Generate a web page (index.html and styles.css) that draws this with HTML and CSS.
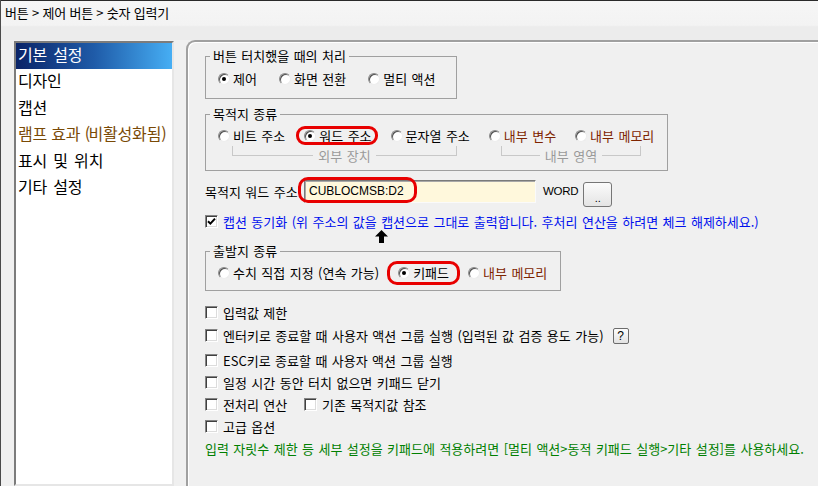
FILE: index.html
```html
<!DOCTYPE html>
<html lang="ko">
<head>
<meta charset="utf-8">
<title>숫자 입력기</title>
<link rel="stylesheet" href="styles.css">
</head>
<body>
<div class="window">
  <header class="titlebar">버튼 &gt; 제어 버튼 &gt; 숫자 입력기</header>
  <div class="main">
    <ul class="nav">
      <li class="sel">기본 설정</li>
      <li>디자인</li>
      <li>캡션</li>
      <li class="lamp">램프 효과 <span class="paren">(</span>비활성화됨<span class="paren">)</span></li>
      <li>표시 및 위치</li>
      <li>기타 설정</li>
    </ul>
    <section class="panel">
      <fieldset class="group g1">
        <legend>버튼 터치했을 때의 처리</legend>
        <div class="radios gap22">
          <label class="opt"><span class="radio on"></span>제어</label>
          <label class="opt"><span class="radio"></span>화면 전환</label>
          <label class="opt"><span class="radio"></span>멀티 액션</label>
        </div>
      </fieldset>

      <fieldset class="group g2">
        <legend>목적지 종류</legend>
        <div class="radios gap19">
          <label class="opt"><span class="radio"></span>비트 주소</label>
          <label class="opt hl hl-word"><span class="radio on"></span>워드 주소</label>
          <label class="opt"><span class="radio"></span>문자열 주소</label>
          <label class="opt internal"><span class="radio"></span>내부 변수</label>
          <label class="opt internal"><span class="radio"></span>내부 메모리</label>
        </div>
        <div class="brackets">
          <div class="br br1"><span class="l"></span><span class="t">외부 장치</span><span class="r"></span></div>
          <div class="br br2"><span class="l"></span><span class="t">내부 영역</span><span class="r"></span></div>
        </div>
      </fieldset>

      <div class="addr">
        <span class="addr-label">목적지 워드 주소</span>
        <div class="field">CUBLOCMSB:D2<span class="hl-addr"></span></div>
        <span class="unit">WORD</span>
        <button class="dots" type="button">..</button>
      </div>

      <label class="caption"><span class="cb checked"><svg viewBox="0 0 9 9" width="9" height="9"><path d="M1 4.2 L3.4 6.6 L8 1.6" fill="none" stroke="#000" stroke-width="2"/></svg></span>캡션 동기화 (위 주소의 값을 캡션으로 그대로 출력합니다. 후처리 연산을 하려면 체크 해제하세요.)</label>
      <svg class="arrow" viewBox="0 0 13 13" width="13" height="13"><path d="M6.5 0 L13 6.5 L9 6.5 L9 13 L4 13 L4 6.5 L0 6.5 Z" fill="#000"/></svg>

      <fieldset class="group g3">
        <legend>출발지 종류</legend>
        <div class="radios gap19">
          <label class="opt"><span class="radio"></span>수치 직접 지정 (연속 가능)</label>
          <label class="opt hl hl-key"><span class="radio on"></span>키패드</label>
          <label class="opt internal"><span class="radio"></span>내부 메모리</label>
        </div>
      </fieldset>

      <div class="checks">
        <div class="crow"><label class="ck"><span class="cb"></span>입력값 제한</label></div>
        <div class="crow tall"><label class="ck"><span class="cb"></span>엔터키로 종료할 때 사용자 액션 그룹 실행 (입력된 값 검증 용도 가능)</label><button class="help" type="button">?</button></div>
        <div class="crow shift"><label class="ck"><span class="cb"></span>ESC키로 종료할 때 사용자 액션 그룹 실행</label></div>
        <div class="crow"><label class="ck"><span class="cb"></span>일정 시간 동안 터치 없으면 키패드 닫기</label></div>
        <div class="crow"><label class="ck w99"><span class="cb"></span>전처리 연산</label><label class="ck"><span class="cb"></span>기존 목적지값 참조</label></div>
        <div class="crow"><label class="ck"><span class="cb"></span>고급 옵션</label></div>
        <p class="note">입력 자릿수 제한 등 세부 설정을 키패드에 적용하려면 [멀티 액션&gt;동적 키패드 실행&gt;기타 설정]를 사용하세요.</p>
      </div>
    </section>
  </div>
</div>
</body>
</html>
```

FILE: styles.css
```css
html, body {
  margin: 0;
  padding: 0;
}
body {
  font-family: "Noto Sans CJK KR", "Noto Sans", sans-serif;
  font-size: 13px;
  color: #000;
  background: #f0f0f0;
}
.window {
  width: 818px;
  height: 486px;
  box-sizing: border-box;
  border-left: 1px solid #4a4a4a;
  display: flex;
  flex-direction: column;
  overflow: hidden;
  background: #f0f0f0;
}
.titlebar {
  height: 40px;
  flex: none;
  box-sizing: border-box;
  border-top: 1px solid #2a2a2a;
  background: linear-gradient(#f6f6f6 0, #f3f3f3 62%, #ececec 66%, #ececec 100%);
  padding: 3px 0 0 4px;
  font-size: 13px;
  line-height: 18px;
  letter-spacing: -0.2px;
}
.main {
  flex: 1;
  display: flex;
  min-height: 0;
}
.nav {
  list-style: none;
  margin: 1px 0 0 13px;
  padding: 0;
  width: 160px;
  flex: none;
  box-sizing: border-box;
  background: #fff;
  border: 2px solid;
  border-color: #7c7c7c #e6e6e6 #e6e6e6 #7c7c7c;
  font-size: 16px;
  letter-spacing: -0.2px;
  word-spacing: 2px;
}
.nav li {
  padding-left: 2px;
  height: 26.4px;
  line-height: 23px;
  white-space: nowrap;
}
.nav .paren {
  letter-spacing: -1.5px;
}
.nav .sel {
  background: linear-gradient(90deg, #0a2468 0%, #1f5ba8 50%, #46aef4 100%);
  color: #fff;
}
.nav .lamp {
  color: #7a4a06;
  word-spacing: 0;
}
.panel {
  flex: 1;
  margin-left: 12px;
  border-top: 2px solid #a0a0a0;
  border-left: 2px solid #a0a0a0;
  border-top-left-radius: 9px;
  box-shadow: inset 1px 1px 0 #fff;
  padding: 6px 0 0 17px;
  word-spacing: 0.8px;
}
.group {
  margin: 0;
  padding: 7px 0 11px 12px;
  border: 1px solid #a0a0a0;
  box-sizing: border-box;
  min-width: 0;
}
.group legend {
  padding: 0 3px;
  margin-left: -8px;
  line-height: 16px;
  font-size: 13px;
}
.g1 { width: 252px; }
.g2 { width: 463px; margin-top: 7px; padding-top: 6px; padding-bottom: 14px; }
.g3 { width: 356px; padding-top: 6px; padding-bottom: 9px; }
.radios {
  display: flex;
  height: 16px;
  align-items: center;
}
.gap22 { gap: 22px; }
.gap19 { gap: 19px; }
.opt {
  display: flex;
  align-items: center;
  gap: 3px;
  line-height: 16px;
  white-space: nowrap;
  position: relative;
}
.internal { color: #7e2400; }
.radio {
  width: 12px;
  height: 12px;
  flex: none;
  border-radius: 50%;
  box-sizing: border-box;
  background: #fff;
  border: 1px solid;
  border-color: #8a8a8a #ececec #ececec #8a8a8a;
  box-shadow: inset 1px 1px 0 #505050;
  display: flex;
  align-items: center;
  justify-content: center;
}
.radio.on::after {
  content: "";
  width: 4px;
  height: 4px;
  border-radius: 50%;
  background: #000;
}
.hl::after {
  content: "";
  position: absolute;
  border: 3px solid #e80000;
  border-radius: 10px;
}
.hl-word::after { left: -8px; right: -6px; top: -2px; bottom: -1px; border-radius: 9px; }
.hl-key::after { left: -11px; right: -11px; top: -4px; bottom: -4px; }
.brackets {
  display: flex;
  margin-top: 2px;
  height: 10px;
}
.br {
  display: flex;
  align-items: flex-end;
  height: 10px;
}
.br .l, .br .r {
  flex: 1;
  height: 10px;
  box-sizing: border-box;
  border-bottom: 1px solid #c8c8c8;
}
.br .l { border-left: 1px solid #c8c8c8; }
.br .r { border-right: 1px solid #c8c8c8; }
.br .t {
  color: #9a9a9a;
  line-height: 14px;
  margin-bottom: -7px;
  padding: 0 5px;
  white-space: nowrap;
}
.br1 { margin-left: 14px; width: 225px; }
.br2 { margin-left: 44px; width: 140px; }
.addr {
  display: flex;
  align-items: flex-start;
  margin-top: 9px;
  height: 27px;
}
.addr-label {
  width: 99px;
  flex: none;
  line-height: 23px;
  white-space: nowrap;
}
.field {
  position: relative;
  width: 232px;
  height: 23px;
  flex: none;
  box-sizing: border-box;
  background: #fff8dc;
  border: 1px solid;
  border-color: #7a7a7a #fafafa #fafafa #7a7a7a;
  box-shadow: inset 1px 1px 0 #a8a8a8;
  font-family: "Liberation Sans", Arial, sans-serif;
  font-size: 12px;
  line-height: 21px;
  padding-left: 4px;
}
.hl-addr {
  position: absolute;
  left: -7px;
  top: -4px;
  width: 119px;
  height: 26px;
  box-sizing: border-box;
  border: 3px solid #e80000;
  border-radius: 10px;
}
.unit {
  margin-left: 7px;
  line-height: 23px;
  font-family: "Liberation Sans", Arial, sans-serif;
  font-size: 11.5px;
  letter-spacing: -0.3px;
}
.dots {
  margin: 2px 0 0 5px;
  width: 29px;
  height: 25px;
  box-sizing: border-box;
  padding: 6px 0 0;
  border: 1px solid #767676;
  border-radius: 3px;
  background: linear-gradient(#fbfbfb, #e4e4e4);
  font-family: "Liberation Sans", Arial, sans-serif;
  font-size: 11px;
  line-height: 16px;
  color: #000;
  text-align: center;
}
.caption {
  display: flex;
  align-items: center;
  gap: 5px;
  margin-top: 7px;
  height: 15px;
  color: #0010ee;
  white-space: nowrap;
}
.cb {
  width: 13px;
  height: 13px;
  flex: none;
  box-sizing: border-box;
  background: #fff;
  border: 1px solid;
  border-color: #848484 #fff #fff #848484;
  box-shadow: inset 1px 1px 0 #404040, inset -1px -1px 0 #dcdcdc;
  display: flex;
  align-items: center;
  justify-content: center;
}
.arrow {
  display: block;
  margin: 1px 0 0 170px;
}
.checks {
  margin-top: 10px;
}
.crow {
  display: flex;
  align-items: center;
  height: 22px;
}
.crow.tall { height: 25px; }
.crow.shift { margin-top: 1px; }
.ck {
  display: flex;
  align-items: center;
  gap: 5px;
  white-space: nowrap;
}
.ck.w99 { width: 99px; }
.help {
  margin-left: 9px;
  width: 16px;
  height: 16px;
  box-sizing: border-box;
  padding: 0;
  border: 1px solid #6c6c6c;
  border-radius: 2px;
  background: linear-gradient(#fdfdfd, #e2e2e2);
  font-family: "Liberation Sans", Arial, sans-serif;
  font-size: 12px;
  line-height: 14px;
  color: #000;
  text-align: center;
}
.note {
  margin: 1px 0 0;
  height: 22px;
  line-height: 22px;
  color: #008000;
  white-space: nowrap;
}
```
